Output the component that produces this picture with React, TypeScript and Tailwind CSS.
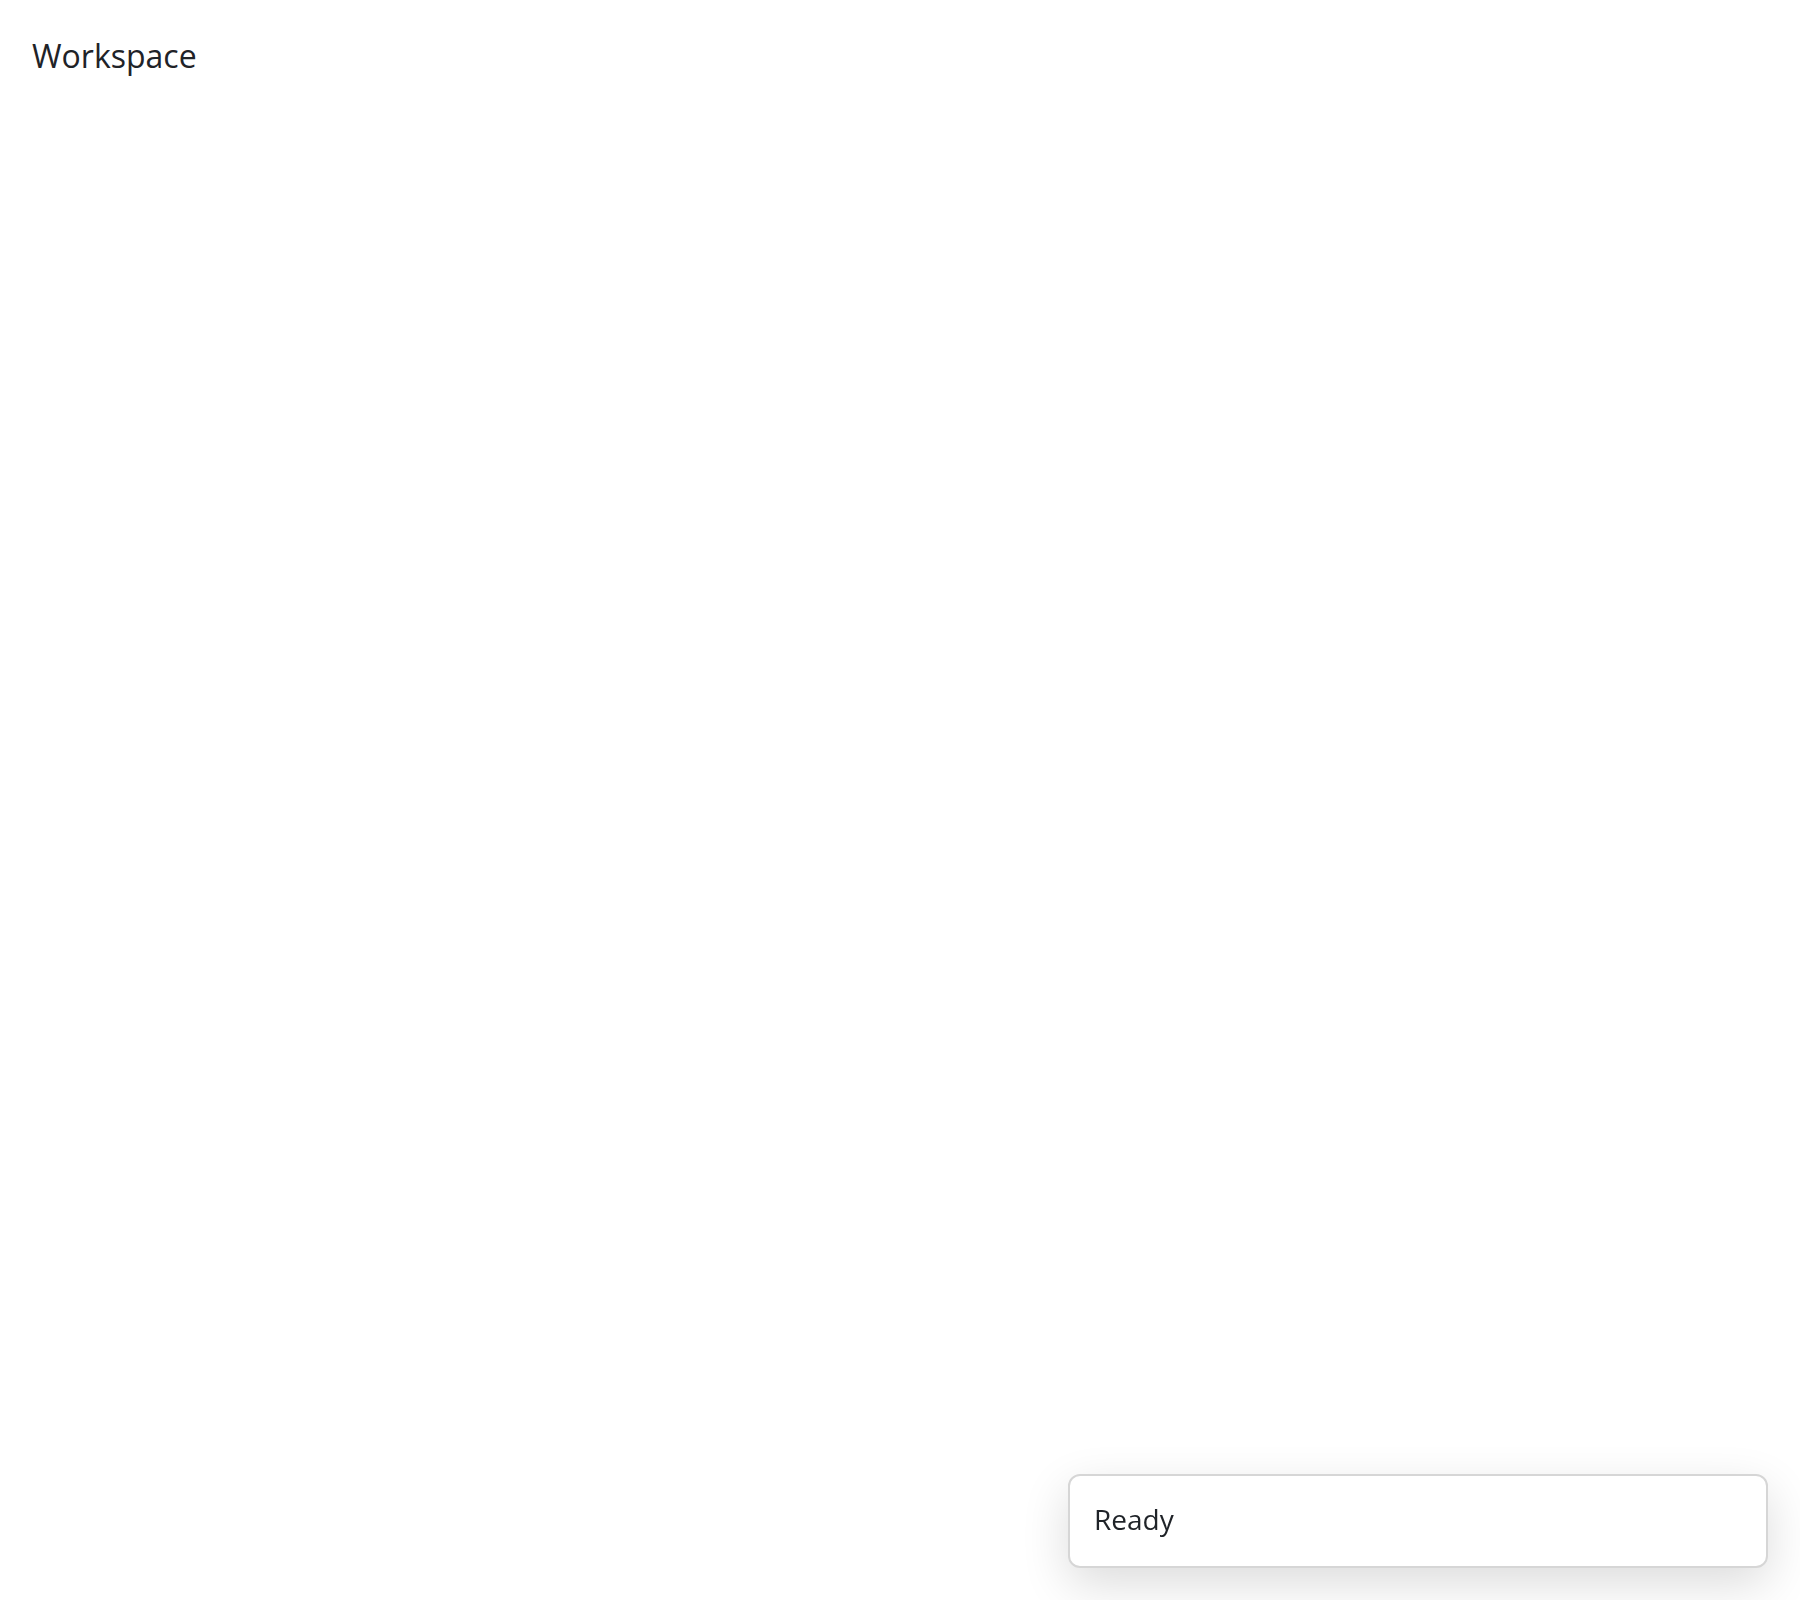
import React from "react";

const App: React.FC = () => {
  return (
    <div
      className="min-h-[1600px] w-full bg-white text-[#1f2328]"
      style={{ fontFamily: '"Open Sans", "Noto Sans", sans-serif' }}
    >
      <div className="px-8 pt-8">
        <h1 className="text-[32px] leading-[1.5] font-normal">Workspace</h1>
      </div>

      <div className="fixed bottom-8 right-8 w-[700px] rounded-xl border-2 border-[#d6d6d6] bg-white px-6 pt-[22px] pb-[26px] shadow-[0_16px_48px_rgba(0,0,0,0.14)]">
        <p className="text-[28px] leading-[1.5]">Ready</p>
      </div>
    </div>
  );
};

export default App;
